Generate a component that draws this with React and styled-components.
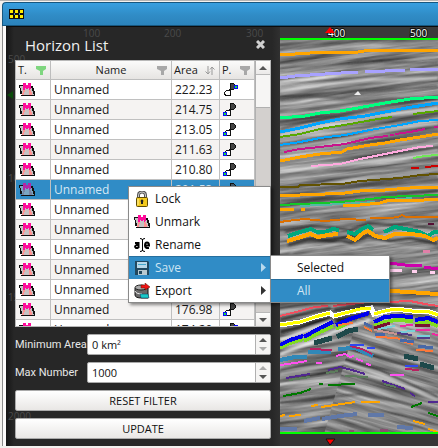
import React from "react";
import styled, { createGlobalStyle } from "styled-components";

const Global = createGlobalStyle`
  * { box-sizing: border-box; }
  html, body { margin: 0; background: #f3f1ee; }
  body, button, input { font-family: "Open Sans", "Noto Sans", sans-serif; font-size: 12px; }
  svg { display: block; flex: none; }
`;

const blue = "#308cc6";

const Page = styled.main`
  height: 100vh;
  display: flex;
  flex-direction: column;
  padding: 1px 0 2px 2px;
  border-top: 1px solid #b4b4b4;
  overflow: hidden;
`;
const TitleBar = styled.header`
  flex: none;
  height: 24px;
  display: flex;
  align-items: center;
  padding-left: 6px;
  border: 1px solid #17577f;
  border-width: 1px 0 1px 1px;
  border-radius: 4px 0 0 0;
  background: linear-gradient(#379fe0, #308cc6 55%, #2b83bb);
`;
const Workspace = styled.div`
  flex: 1;
  min-height: 0;
  display: flex;
  position: relative;
  margin-left: 4px;
  border-top: 1px solid #0c0c0c;
  background: #262626;
  box-shadow: -3px 0 #fbfaf9, -4px 0 #8c8c8c;
`;
const Panel = styled.section`
  flex: none;
  width: 274px;
  display: flex;
  flex-direction: column;
  padding: 0 9px;
  isolation: isolate;
  background: linear-gradient(90deg, #151515, #272727 8px, #272727 266px, #303030);
`;
const PanelHead = styled.div`
  flex: none;
  height: 33px;
  display: flex;
  align-items: center;
  justify-content: space-between;
  padding: 2px 6px 0 10px;
`;
const Title = styled.h1`
  margin: 0;
  color: #f0f0f0;
  font-size: 15px;
  line-height: 20px;
  font-weight: 400;
`;
const CloseButton = styled.button`
  padding: 0;
  border: 0;
  background: none;
`;
const Ghost = styled.span`
  position: absolute;
  z-index: -1;
  left: ${(p) => p.$x}px;
  top: ${(p) => p.$y}px;
  color: #4a4a4a;
  font-size: 10px;
  line-height: 12px;
`;
const GhostMarker = styled.svg`
  position: absolute;
  z-index: -1;
  left: 1px;
  top: 64px;
`;
const ListBox = styled.div`
  flex: 1;
  min-height: 0;
  display: flex;
  overflow: hidden;
  border: 1px solid #b8b8b8;
  background: #fff;
`;
const Table = styled.table`
  flex: 1;
  height: 0;
  table-layout: fixed;
  border-collapse: separate;
  border-spacing: 0;
  color: #1a1a1a;
`;
const HeadCell = styled.th`
  width: ${(p) => (p.$w ? p.$w + "px" : "auto")};
  height: 19px;
  padding: 0 4px 0 2px;
  border-right: 1px solid #bdbdbd;
  border-bottom: 1px solid #bdbdbd;
  background: linear-gradient(#fbfbfa, #e6e4e2);
  font-size: 11px;
  font-weight: 400;
  line-height: 18px;
`;
const HeadInner = styled.div`
  display: flex;
  align-items: center;
  justify-content: space-between;
  span {
    flex: ${(p) => (p.$center ? 1 : "none")};
    padding-left: ${(p) => (p.$center ? 12 : 0)}px;
    text-align: center;
  }
`;
const Row = styled.tr`
  background: ${(p) => (p.$selected ? blue : p.$odd ? "#f5f3f2" : "#fff")};
  color: ${(p) => (p.$selected ? "#d5e8f4" : "#1a1a1a")};
`;
const Cell = styled.td`
  height: 20px;
  padding: 0 3px;
  border-right: 1px solid #c0c0c0;
  border-bottom: 1px solid #c0c0c0;
  line-height: 18px;
  overflow: hidden;
  white-space: nowrap;
`;
const ScrollBar = styled.div`
  flex: none;
  width: 15px;
  display: flex;
  flex-direction: column;
  justify-content: space-between;
  border-left: 1px solid #b0b0b0;
  background: linear-gradient(#f6f5f4 0 46px, #b0b0b0 46px 47px, #d3d0ce 47px);
`;
const ScrollButton = styled.button`
  height: 14px;
  width: 100%;
  padding: 0;
  display: grid;
  place-items: center;
  border: solid #b8b8b8;
  border-width: ${(p) => (p.$down ? "1px 0 0" : "0 0 1px")};
  background: linear-gradient(#fdfdfc, #ebe9e8);
`;
const Fields = styled.form`
  flex: none;
  display: flex;
  flex-direction: column;
  gap: 7px;
  padding: 7px 0;
`;
const Field = styled.div`
  display: grid;
  grid-template-columns: 72px 1fr;
  height: 21px;
  align-items: center;
  label { color: #e8e8e8; font-family: Roboto, sans-serif; font-size: 11px; white-space: nowrap; }
`;
const SpinBox = styled.div`
  display: flex;
  height: 21px;
  overflow: hidden;
  border: 1px solid #aaa;
  border-radius: 2px;
  background: #fff;
  input {
    flex: 1;
    min-width: 0;
    padding: 0 4px;
    border: 0;
    outline: 0;
    background: none;
    color: #111;
    font-size: 11px;
  }
`;
const Steps = styled.div`
  width: 15px;
  display: flex;
  flex-direction: column;
  border-left: 1px solid #b0b0b0;
  background: #f5f4f3;
`;
const StepButton = styled.button`
  flex: 1;
  padding: 0;
  display: grid;
  place-items: center;
  border: 0;
  background: none;
`;
const Action = styled.button`
  height: 21px;
  padding: 0;
  border: 1px solid #aaa;
  border-radius: 2px;
  background: linear-gradient(#fff, #e9e7e5);
  color: #111;
  font-size: 11px;
`;
const Chart = styled.svg`
  flex: 1;
  min-width: 0;
  width: 0;
  height: 100%;
`;
const Menu = styled.div`
  position: absolute;
  left: ${(p) => p.$x}px;
  top: ${(p) => p.$y}px;
  width: ${(p) => p.$w}px;
  border: 1px solid #8a8a8a;
  background: #fff;
  box-shadow: 2px 2px 3px rgba(0, 0, 0, 0.45);
`;
const MenuItem = styled.button`
  width: 100%;
  height: 23px;
  display: grid;
  grid-template-columns: 16px 1fr auto;
  align-items: center;
  column-gap: 5px;
  padding: 0 4px 0 5px;
  border: 0;
  text-align: left;
  line-height: 20px;
  background: ${(p) => (p.$active ? blue : "#fff")};
  box-shadow: ${(p) => (p.$active ? "inset 0 1px #266f9e" : "none")};
  color: ${(p) => (p.$active ? "#cfe5f3" : "#111")};
`;

const Arrow = ({ dir, color = "#555", big }) => (
  <svg width={big ? 5 : 8} height={big ? 9 : 4} viewBox={big ? "0 0 5 9" : "0 0 8 4"} aria-hidden="true">
    <path fill={color} d={big ? "M0 0L5 4.5L0 9Z" : dir === "up" ? "M0 4L4 0L8 4Z" : "M0 0H8L4 4Z"} />
  </svg>
);
const Filter = ({ color = "#a8a8a8" }) => (
  <svg width="10" height="9" viewBox="0 0 10 9" aria-hidden="true">
    <path fill={color} d="M0 0H10V3L7 5V9H4V5L0 3Z" />
  </svg>
);
const Sort = () => (
  <svg width="10" height="9" viewBox="0 0 10 9" fill="none" stroke="#999" aria-hidden="true">
    <path d="M3 0V8M0.500 5.500L3 8L5 5.500M7 9V1M5 3.500L7 1L9.500 3.500" />
  </svg>
);
const Mark = ({ dim }) => (
  <svg width="16" height="14" viewBox="0 0 16 14" aria-hidden="true" shapeRendering="crispEdges">
    <path fill={dim ? "#7ba6c2" : "#c6c2c2"} d="M1 3H13L15 12H3Z" />
    <path fill="#111" d="M0 2H4V3H1V5H2V8H3V11H2V12H15V11H14V8H13V5H12V3H14V5H15V8H16V13H2V11H1V5H0Z" />
    <path fill={dim ? "#7884a3" : "#ff9292"} d="M4 7H6V9H5V12H3V10H4ZM10 7H12V9H13V12H10Z" />
    <path fill={dim ? "#b127a6" : "#ff0a9a"} d="M4 0H7V2H9V0H12V6H11V7H10V5H9V6H7V5H6V7H4Z" />
  </svg>
);
const Polarity = ({ left, dim }) => (
  <svg width="16" height="16" viewBox="0 0 16 16" aria-hidden="true" shapeRendering="crispEdges">
    <path fill={dim ? "#3f5666" : "#444"} stroke="#111" d="M7.500 8.500V1.500H10.500L12.500 3.500V5.500L10.500 7.500H8" />
    <path fill="#fff" stroke="#111" d="M7.500 7.500V13.500H3.500L1.500 12.500V10.500L3.500 8.500H5.500Z" />
    <g transform={left ? "translate(0 10)" : "translate(11 3)"}>
      <rect width="4" height="4" fill="#0a0aff" />
      <rect x="1" y="1" width="2" height="2" fill="#19e13a" />
    </g>
  </svg>
);
const Lock = () => (
  <svg width="16" height="16" viewBox="0 0 16 16" aria-hidden="true">
    <path d="M4.500 8V4Q4.500 1 8 1Q11.500 1 11.500 4V8" fill="none" stroke="#555" strokeWidth="3" />
    <path d="M4.500 8V4Q4.500 1 8 1Q11.500 1 11.500 4V8" fill="none" stroke="#c8c8c8" />
    <rect x="2.500" y="6.500" width="11" height="9" rx="1" fill="#f2c91e" stroke="#5f4b05" />
    <path d="M4 8V14" stroke="#fff2a0" />
    <path d="M8 8.500A1.500 1.500 0 0 1 9 11V13H7V11A1.500 1.500 0 0 1 8 8.500Z" fill="#222" />
  </svg>
);
const RenameIcon = () => (
  <svg width="16" height="16" viewBox="0 0 16 16" fill="none" stroke="#000" strokeWidth="2" aria-hidden="true">
    <path d="M1 6H4.500V11M4.500 8H2.500Q0 9.500 2 11H4.500M11.500 8.500H15Q15 5.500 13 5.500Q11 5.500 11 8.500Q11 11.500 15 11" />
    <path strokeWidth="1" d="M8.500 2V14M6 1.500Q8.500 1.500 8.500 3Q8.500 1.500 11 1.500M6 14.500Q8.500 14.500 8.500 13Q8.500 14.500 11 14.500" />
  </svg>
);
const Floppy = () => (
  <svg width="16" height="16" viewBox="0 0 16 16" aria-hidden="true">
    <path fill="#21485f" d="M1 1H14L15 2V15H1Z" />
    <rect x="3" y="2" width="10" height="6" fill="#b9d8e8" />
    <path d="M4 4.500H12" stroke="#45a8cd" />
    <rect x="4" y="10" width="9" height="5" fill="#b7c9d1" />
    <rect x="5" y="11" width="3" height="3" fill="#21485f" />
  </svg>
);
const ExportIcon = () => (
  <svg width="16" height="16" viewBox="0 0 16 16" aria-hidden="true">
    <path d="M1 5V12Q1 15 8 15H14V5Z" fill="#696969" stroke="#111" />
    <path d="M1 8Q2 11 8 11" fill="none" stroke="#eee" />
    <ellipse cx="7" cy="4.500" rx="6" ry="2.500" fill="#aaa" stroke="#222" />
    <path d="M7 2H11V0L16 4L11 7V5H7Z" fill="#f01414" stroke="#510" strokeWidth=".5" />
    <path d="M6 11H14L15 15H7Z" fill="#19c9c8" stroke="#135" strokeWidth=".5" />
  </svg>
);

const horizons = [
  ["#ffa500", 3, "280,55 295,54 326,52 358,52 370,50 403,50 438,50"],
  ["#a8a2ff", 3, "280,78 295,76 325,74 358,72", "365,71 380,72 390,70 405,71", "410,69 438,69"],
  ["#00ff7f", 3, "280,118 305,116 320,113 340,111 358,108 385,103 410,99 438,97"],
  ["#00a5ff", 3, "280,132 300,128 320,123 340,119 365,116 385,112 412,107 438,103"],
  ["#58a800", 2, "280,137 300,134 320,129 350,124 378,119 392,117", "413,114 438,111"],
  ["#00a5ff", 2, "280,145 300,142 320,138 345,135 370,130 400,125 420,121 438,120"],
  ["#c8148c", 2, "284,152 300,149 320,147 345,144 370,138 388,136", "390,135 394,135", "395,134 410,132 425,129", "434,127 438,127"],
  ["#ffa500", 3, "280,161 300,157 320,154 342,152 347,149 370,145 385,143 400,140 420,137 438,134"],
  ["#ffaadf", 2, "311,166 340,164 360,159 380,155 405,150 420,147 433,146"],
  ["#70e858", 2, "413,158 425,156 438,155"],
  ["#cc0000", 2, "411,168 419,168", "425,167 438,166"],
  ["#625200", 2, "280,187 298,187 300,185 342,184 360,181 400,178 420,175 438,174"],
  ["#ffa500", 3, "280,196 300,195 325,194 345,193 360,191 385,190 410,188 438,187"],
  ["#55b8a4", 2, "300,206 343,204 375,202", "390,200 412,198"],
  ["#14c828", 2, "280,205 300,204 320,203 340,202 370,199 385,197 410,196 438,195"],
  ["#ffa500", 3, "343,206 360,205 380,203 390,200 410,201 438,199", "280,210 294,209", "301,209 305,209"],
  ["#dc7000", 2, "280,222 287,221 305,219 325,221 345,219 366,220", "370,218 390,218 398,217 402,215 406,217 438,217"],
  ["#00a87d", 4, "288,236 300,232 311,229 317,232 325,232 333,229 339,230", "347,232 355,234 362,229 368,226 373,230", "384,232 395,227 410,230 420,232 428,236 434,232 438,232"],
  ["#ffa500", 4, "287,241 298,238 310,234 318,237 328,235 338,234", "347,236 355,240 362,234 368,231 375,236 385,238 395,234 412,234 425,236 433,240 438,238"],
  ["#571035", 2, "428,224 434,224"],
  ["#e080a8", 3, "423,252 430,251"],
  ["#cd00ad", 3, "389,263 405,265 422,266", "424,267 438,269"],
  ["#ffd0ee", 3, "389,270 402,270", "412,271 417,271", "430,272 435,272"],
  ["#ffa500", 4, "389,291 410,292 422,293 438,294"],
  ["#f05060", 2, "280,316 300,311 315,307 328,306", "333,306 360,303 375,301", "389,302 410,301 425,304 438,306"],
  ["#ffff00", 3, "280,325 300,322 315,317 330,313", "334,316 345,313 360,309 371,308", "374,314 385,311 395,309 412,311", "412,312 427,311 438,315"],
  ["#80dc20", 4, "280,348 290,343 303,339", "304,341 320,332 333,326", "336,329 346,324", "374,326 385,322 396,320 413,321", "415,324 428,322 438,326"],
  ["#0000f0", 4, "280,345 290,340 303,336", "304,337 320,328 333,322", "336,325 350,319 369,313", "374,322 385,317 396,316 413,317", "415,320 428,318 438,322"],
  ["#7a1030", 3, "374,328 390,323", "415,325 430,325"],
  ["#f028a0", 2, "400,326 413,325", "416,330 430,330", "432,334 438,335"],
  ["#78d0d8", 2, "378,329 395,326", "400,332 415,331", "417,336 430,336"],
  ["#503c88", 2, "397,333 412,335", "417,338 430,338"],
  ["#c89490", 2, "374,330 397,334", "402,339 414,342"],
  ["#ff7838", 2, "338,325 353,323", "364,327 372,331", "376,337 397,338 405,342 413,344", "416,350 433,351"],
  ["#4868a8", 3, "364,323 372,327", "375,334 385,334", "400,340 414,342", "418,346 433,348"],
  ["#1e484a", 5, "314,343 332,338", "337,337 348,331 358,329", "404,356 418,359", "420,364 434,368"],
  ["#3088b8", 4, "280,360 295,357 307,357", "308,352 331,352", "338,349 355,348 366,353 373,356"],
  ["#b82060", 2, "310,349 332,350", "350,346 362,349 372,354", "405,369 419,370"],
  ["#3048f0", 2, "350,345 364,345", "367,348 375,348", "405,366 418,366"],
  ["#ff50f0", 2, "280,365 295,363 307,361", "316,363 322,363", "336,356 345,354 350,357 354,356", "356,359 363,361", "366,364 371,365", "390,375 404,375"],
  ["#502890", 2, "286,378 310,374", "328,370 340,367 352,370 365,374", "382,381 405,389", "410,393 415,396", "428,402 438,402"],
  ["#5c7c5c", 2, "289,380 310,377", "326,373 338,371", "345,376 368,377", "384,384 396,387"],
  ["#007800", 2, "283,396 300,393 311,389", "319,384 323,384", "328,385 355,384", "411,407 422,403", "428,413 438,416"],
  ["#ffa500", 2, "280,416 285,415", "289,416 301,415", "311,406 318,405", "321,407 335,405 355,402", "361,402 380,402", "413,421 425,424", "428,429 438,432"],
  ["#6078a8", 4, "304,421 320,418", "322,419 340,416 357,414", "368,415 384,415", "397,427 413,428", "280,429 297,429"],
  ["#885070", 3, "349,432 354,431", "380,430 388,430"],
];

const reflectors = [
  ["#eee", 2, "280,91 320,85 370,80 438,78"],
  ["#333", 1, "280,68 330,64 380,62 438,63"],
  ["#444", 1, "280,87 320,81 370,76 438,74"],
  ["#444", 2, "280,100 312,96 340,98 370,92 438,86"],
  ["#fff", 2, "280,135 310,129 350,122 400,113 438,108"],
  ["#333", 2, "280,129 310,121 350,113 400,104 438,98"],
  ["#ddd", 2, "280,149 330,141 400,129 438,124"],
  ["#333", 1, "280,154 330,149 400,136 438,130"],
  ["#ddd", 2, "280,170 320,169 360,163 400,156 438,150"],
  ["#444", 2, "280,190 340,187 400,181 438,177"],
  ["#333", 2, "280,200 340,198 400,193 438,191"],
  ["#222", 2, "285,232 311,226 330,227 350,230 368,223 390,225 410,225 438,229"],
  ["#222", 3, "288,245 310,239 330,241 350,243 368,236 390,241 410,238 438,244"],
  ["#ddd", 1, "290,253 305,246 320,248 340,243 355,248 368,242 400,246 438,250"],
  ["#222", 3, "280,320 315,311 331,308", "334,310 370,304 438,308"],
  ["#111", 4, "280,332 300,327 331,318", "336,321 371,313"],
  ["#fff", 3, "280,340 300,333 332,321", "280,354 310,343 334,332 370,320"],
  ["#222", 2, "280,370 310,364 345,360 380,370 438,397"],
  ["#ddd", 2, "280,374 310,369 345,363 380,375 438,401"],
  ["#333", 2, "280,403 320,398 360,394 400,402 438,412"],
];

const halo = ["280,325 300,322 315,317 330,313 334,316 345,313 371,308 374,314 395,309 412,311 427,311 438,315"];

const Lines = ({ set }) =>
  set.flatMap(([color, width, ...runs]) =>
    runs.map((points) => <polyline key={color + points} points={points} fill="none" stroke={color} strokeWidth={width} />)
  );

const Seismic = () => (
  <Chart viewBox="280 27 158 419" preserveAspectRatio="xMinYMin slice" role="img" aria-label="Seismic section with tracked horizons">
    <defs>
      <filter id="strata" x="0" y="0" width="1" height="1" colorInterpolationFilters="sRGB">
        <feTurbulence type="fractalNoise" baseFrequency="0.011 0.18" numOctaves="4" seed="7" />
        <feColorMatrix values="0.850 0 0 0 .1  0.850 0 0 0 .1  0.850 0 0 0 .1  0 0 0 0 1" />
      </filter>
      <filter id="soft" filterUnits="userSpaceOnUse" x="280" y="40" width="158" height="393"><feGaussianBlur stdDeviation="1" /></filter>
      <clipPath id="plot"><rect x="280" y="40" width="158" height="393" /></clipPath>
      <clipPath id="lower"><path d="M280 310L375 300L438 308V440H280Z" /></clipPath>
    </defs>
    <rect x="280" y="27" width="158" height="419" fill="#3a3a3a" />
    <g clipPath="url(#plot)">
      <rect x="240" y="10" width="280" height="460" filter="url(#strata)" transform="rotate(-7 359 230)" />
      <g clipPath="url(#lower)">
        <rect x="360" y="260" width="160" height="260" filter="url(#strata)" transform="rotate(16 370 310)" />
      </g>
      <g filter="url(#soft)" opacity=".75"><Lines set={reflectors} /></g>
      <path d="M358 91L361 95H354Z" fill="#eee" />
      <g shapeRendering="crispEdges">
        <Lines set={[["#fff", 5, ...halo]]} />
        <Lines set={horizons} />
      </g>
    </g>
    <path d="M280 39H438M280 433H438" stroke="#00ff00" strokeWidth="2" />
    <rect x="280" y="434" width="158" height="12" fill="#363636" />
    <g fill="#fff" stroke="#111" strokeWidth="2" paintOrder="stroke" fontSize="10">
      <text x="328" y="37">400</text>
      <text x="410" y="37">500</text>
    </g>
    <path d="M330 27L335 33H325Z" fill="#f00" />
    <path d="M326 439H335L330 445Z" fill="#f00" stroke="#111" />
  </Chart>
);

const rows = [
  ["222.23", false], ["214.75", true], ["213.05", true], ["211.63", true], ["210.80", true],
  ["201.53", true], ["198.42", true], ["192.16", true], ["188.07", false], ["183.60", true],
  ["179.25", false], ["176.98", true], ["174.20", false],
];
const Spin = ({ id, label, value, first }) => (
  <Field>
    <label htmlFor={id}>{label}</label>
    <SpinBox>
      <input id={id} defaultValue={value} />
      <Steps>
        <StepButton type="button" aria-label={`Increase ${label}`}><Arrow dir="up" color={first ? "#555" : "#aaa"} /></StepButton>
        <StepButton type="button" aria-label={`Decrease ${label}`}><Arrow color={first ? "#aaa" : "#555"} /></StepButton>
      </Steps>
    </SpinBox>
  </Field>
);

export default function App() {
  return (
    <Page>
      <Global />
      <TitleBar>
        <svg width="16" height="11" viewBox="0 0 16 11" shapeRendering="crispEdges" aria-hidden="true">
          <path fill="#111" d="M0 0H15V10H0Z" />
          <path fill={blue} d="M5 4H6V6H5ZM10 4H11V6H10Z" />
          {[1, 6, 11].flatMap((x) => [1, 6].map((y) => (
            <rect key={`${x}-${y}`} x={x} y={y} width="3" height="3" fill="#ffee00" />
          )))}
        </svg>
      </TitleBar>
      <Workspace>
        <Panel>
          <Ghost $x={77} $y={0}>100</Ghost>
          <Ghost $x={158} $y={0}>200</Ghost>
          <Ghost $x={240} $y={0}>300</Ghost>
          <Ghost $x={2} $y={26}>500</Ghost>
          <Ghost $x={2} $y={145}>1000</Ghost>
          <Ghost $x={2} $y={264}>1500</Ghost>
          <Ghost $x={2} $y={383}>2000</Ghost>
          <GhostMarker width="6" height="8" viewBox="0 0 6 8"><path d="M6 0V8L0 4Z" fill="#0a4a0a" /></GhostMarker>
          <PanelHead>
            <Title>Horizon List</Title>
            <CloseButton aria-label="Close">
              <svg width="9" height="9" viewBox="0 0 9 9"><path d="M1 1L8 8M8 1L1 8" stroke="#d0d0d0" strokeWidth="3" /></svg>
            </CloseButton>
          </PanelHead>
          <ListBox>
            <Table>
              <thead>
                <tr>
                  <HeadCell $w={35}><HeadInner><span>T.</span><Filter color="#7fd67f" /></HeadInner></HeadCell>
                  <HeadCell><HeadInner $center><span>Name</span><Filter /></HeadInner></HeadCell>
                  <HeadCell $w={48}><HeadInner><span>Area</span><Sort /></HeadInner></HeadCell>
                  <HeadCell $w={35}><HeadInner><span>P.</span><Filter /></HeadInner></HeadCell>
                </tr>
              </thead>
              <tbody>
                {rows.map(([area, left], i) => (
                  <Row key={area} $selected={i === 5} $odd={i % 2 === 1}>
                    <Cell><Mark dim={i === 5} /></Cell>
                    <Cell>Unnamed</Cell>
                    <Cell>{area}</Cell>
                    <Cell><Polarity left={left} dim={i === 5} /></Cell>
                  </Row>
                ))}
              </tbody>
            </Table>
            <ScrollBar>
              <ScrollButton aria-label="Scroll up"><Arrow dir="up" /></ScrollButton>
              <ScrollButton $down aria-label="Scroll down"><Arrow /></ScrollButton>
            </ScrollBar>
          </ListBox>
          <Fields onSubmit={(e) => e.preventDefault()}>
            <Spin id="area" label="Minimum Area" value="0 km²" first />
            <Spin id="max" label="Max Number" value="1000" />
            <Action type="button">RESET FILTER</Action>
            <Action type="submit">UPDATE</Action>
          </Fields>
        </Panel>
        <Seismic />
        <Menu role="menu" $x={122} $y={159} $w={143}>
          <MenuItem role="menuitem"><Lock /><span>Lock</span></MenuItem>
          <MenuItem role="menuitem"><Mark /><span>Unmark</span></MenuItem>
          <MenuItem role="menuitem"><RenameIcon /><span>Rename</span></MenuItem>
          <MenuItem role="menuitem" aria-haspopup="menu" $active><Floppy /><span>Save</span><Arrow big color="#b7d9ed" /></MenuItem>
          <MenuItem role="menuitem" aria-haspopup="menu"><ExportIcon /><span>Export</span><Arrow big color="#333" /></MenuItem>
        </Menu>
        <Menu role="menu" $x={264} $y={228} $w={120}>
          <MenuItem role="menuitem"><i /><span>Selected</span></MenuItem>
          <MenuItem role="menuitem" $active><i /><span>All</span></MenuItem>
        </Menu>
      </Workspace>
    </Page>
  );
}
